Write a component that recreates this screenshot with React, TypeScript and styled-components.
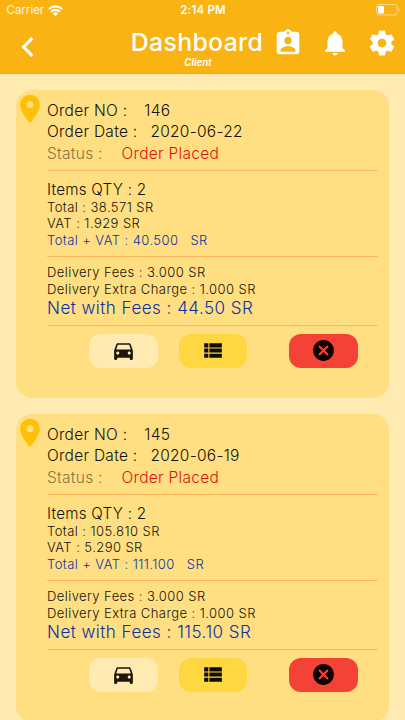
import React from "react";
import styled, { createGlobalStyle, css } from "styled-components";

const GlobalStyle = createGlobalStyle`
  * { box-sizing: border-box; }
  html, body { margin: 0; height: 100%; overflow: hidden; background: #ffebb2; }
  body { font-family: Inter, "Liberation Sans", sans-serif; }
`;

const Screen = styled.div`
  width: 405px;
  height: 720px;
  overflow: hidden;
  background: #ffebb2;
  display: flex;
  flex-direction: column;
`;

const Header = styled.header`
  flex: none;
  height: 74px;
  background: #f9b312;
  border-bottom: 1px solid #f6ad0b;
  color: #fff;
`;

const StatusBar = styled.div`
  height: 20px;
  padding: 0 5.5px 0 6.5px;
  display: grid;
  grid-template-columns: 1fr auto 1fr;
  align-items: center;
  font-size: 11.5px;
  line-height: 20px;
`;

const Carrier = styled.div`
  display: flex;
  align-items: center;
  gap: 4px;
  color: #fff4dc;
`;

const Clock = styled.div`
  font-weight: 600;
  letter-spacing: 0.2px;
`;

const BatterySlot = styled.div`
  display: flex;
  justify-content: flex-end;
`;

const NavBar = styled.div`
  height: 53px;
  padding: 0 8.5px 0 20px;
  display: flex;
  align-items: flex-start;
`;

const BackButton = styled.div`
  width: 110px;
  padding-top: 16px;
  line-height: 0;
`;

const Titles = styled.div`
  width: 136px;
  display: flex;
  flex-direction: column;
  align-items: center;
  white-space: nowrap;
`;

const Title = styled.h1`
  margin: 7px 2px 0 0;
  font-size: 24.8px;
  font-weight: 500;
  line-height: 30px;
  letter-spacing: 0.35px;
`;

const Subtitle = styled.div`
  font-size: 9.8px;
  font-weight: 600;
  font-style: italic;
  line-height: 12px;
`;

const Actions = styled.div`
  margin-left: auto;
  padding-top: 8px;
  display: flex;
  gap: 17px;
  line-height: 0;
`;

const Orders = styled.main`
  padding: 16px 16px 0 15.5px;
  display: flex;
  flex-direction: column;
  gap: 16px;
`;

const Card = styled.article`
  flex: none;
  height: 308px;
  border-radius: 16px;
  background: #ffdf82;
  padding: 0 11px 0 0;
  display: flex;
`;

const PinSlot = styled.div`
  width: 31.5px;
  padding-top: 2px;
  flex: none;
  line-height: 0;

  svg {
    margin-left: -2.7px;
  }
`;

const Details = styled.div`
  flex: 1;
  min-width: 0;
  padding-top: 9.5px;
`;

const Divider = styled.hr`
  margin: 0;
  height: 1px;
  border: 0;
  background: #ffb65c;
`;

const Group = styled.section<{ $height: number; $top?: number }>`
  height: ${(p) => p.$height}px;
  padding-top: ${(p) => p.$top ?? 0}px;
`;

type LineKind = "head" | "items" | "small" | "net";

const kinds = {
  head: css`font-size: 15.5px; line-height: 21.5px; letter-spacing: 0.27px;`,
  items: css`font-size: 15.2px; line-height: 19px; letter-spacing: 0.25px;`,
  small: css`font-size: 13px; line-height: 16.6px; letter-spacing: 0.43px;`,
  net: css`font-size: 17px; line-height: 22px; letter-spacing: 0.48px;`,
};

const Line = styled.div<{ $kind: LineKind; $color?: string; $gap?: number }>`
  display: flex;
  gap: ${(p) => p.$gap ?? 0}px;
  color: ${(p) => p.$color ?? "#15120a"};
  font-weight: 300;
  white-space: nowrap;
  ${(p) => kinds[p.$kind]}
`;

const Value = styled.span<{ $color?: string }>`
  color: ${(p) => p.$color ?? "inherit"};
`;

const Buttons = styled.div`
  display: flex;
  padding: 7.5px 0 0 42px;
`;

const Button = styled.div<{ $color: string; $after?: number }>`
  width: 68.5px;
  height: 34.5px;
  border-radius: 12px;
  margin-right: ${(p) => p.$after ?? 0}px;
  background: ${(p) => p.$color};
  display: flex;
  align-items: center;
  justify-content: center;
`;

const paths = {
  pin: "M12 2C8.13 2 5 5.13 5 9c0 5.25 7 13 7 13s7-7.75 7-13c0-3.87-3.13-7-7-7zm0 9.5c-1.38 0-2.5-1.12-2.5-2.5s1.12-2.5 2.5-2.5 2.5 1.12 2.5 2.5-1.12 2.5-2.5 2.5z",
  badge:
    "M19 3h-4.18C14.4 1.84 13.3 1 12 1c-1.3 0-2.4.84-2.82 2H5c-1.1 0-2 .9-2 2v14c0 1.1.9 2 2 2h14c1.1 0 2-.9 2-2V5c0-1.1-.9-2-2-2zm-7 0c.55 0 1 .45 1 1s-.45 1-1 1-1-.45-1-1 .45-1 1-1zm0 4c1.66 0 3 1.34 3 3s-1.34 3-3 3-3-1.34-3-3 1.34-3 3-3zm6 12H6v-1.4c0-2 4-3.1 6-3.1s6 1.1 6 3.1V19z",
  bell: "M12 22c1.1 0 2-.9 2-2h-4c0 1.1.89 2 2 2zm6-6v-5c0-3.07-1.64-5.64-4.5-6.32V4c0-.83-.67-1.5-1.5-1.5s-1.5.67-1.5 1.5v.68C7.63 5.36 6 7.92 6 11v5l-2 2v1h16v-1l-2-2z",
  gear: "M19.43 12.98c.04-.32.07-.64.07-.98s-.03-.66-.07-.98l2.11-1.65c.19-.15.24-.42.12-.64l-2-3.46c-.12-.22-.39-.3-.61-.22l-2.49 1c-.52-.4-1.08-.73-1.69-.98l-.38-2.65C14.46 2.18 14.25 2 14 2h-4c-.25 0-.46.18-.49.42l-.38 2.65c-.61.25-1.17.59-1.69.98l-2.49-1c-.23-.09-.49 0-.61.22l-2 3.46c-.13.22-.07.49.12.64l2.11 1.65c-.04.32-.07.65-.07.98s.03.66.07.98l-2.11 1.65c-.19.15-.24.42-.12.64l2 3.46c.12.22.39.3.61.22l2.49-1c.52.4 1.08.73 1.69.98l.38 2.65c.03.24.24.42.49.42h4c.25 0 .46-.18.49-.42l.38-2.65c.61-.25 1.17-.59 1.69-.98l2.49 1c.23.09.49 0 .61-.22l2-3.46c.12-.22.07-.49-.12-.64l-2.11-1.65zM12 15.5c-1.93 0-3.5-1.57-3.5-3.5s1.57-3.5 3.5-3.5 3.5 1.57 3.5 3.5-1.57 3.5-3.5 3.5z",
  car: "M18.92 6.01C18.72 5.42 18.16 5 17.5 5h-11c-.66 0-1.21.42-1.42 1.01L3 12v8c0 .55.45 1 1 1h1c.55 0 1-.45 1-1v-1h12v1c0 .55.45 1 1 1h1c.55 0 1-.45 1-1v-8l-2.08-5.99zM6.5 16c-.83 0-1.5-.67-1.5-1.5S5.67 13 6.5 13s1.5.67 1.5 1.5S7.33 16 6.5 16zm11 0c-.83 0-1.5-.67-1.5-1.5s.67-1.5 1.5-1.5 1.5.67 1.5 1.5-.67 1.5-1.5 1.5zM5 11l1.5-4.5h11L19 11H5z",
  list: "M4 14h4v-4H4v4zm0 5h4v-4H4v4zM4 9h4V5H4v4zm5 5h12v-4H9v4zm0 5h12v-4H9v4zM9 5v4h12V5H9z",
  cancel:
    "M12 2C6.47 2 2 6.47 2 12s4.47 10 10 10 10-4.47 10-10S17.53 2 12 2zm5 13.59L15.59 17 12 13.41 8.41 17 7 15.59 10.59 12 7 8.41 8.41 7 12 10.59 15.59 7 17 8.41 13.41 12 17 15.59z",
};

const Icon = ({ name, size, color }: { name: keyof typeof paths; size: number; color: string }) => (
  <svg width={size} height={size} viewBox="0 0 24 24" fill={color}>
    <path d={paths[name]} />
  </svg>
);

const Wifi = () => (
  <svg width="15" height="11" viewBox="0 0 15 11" fill="none" stroke="#fff" strokeWidth="2.1">
    <path d="M0.9 4.1a9.4 9.4 0 0 1 13.2 0M3.1 6.7a6.2 6.2 0 0 1 8.8 0" />
    <path d="M4.9 8.5a3.7 3.7 0 0 1 5.2 0L7.5 11z" fill="#fff" stroke="none" />
  </svg>
);

const Battery = () => (
  <svg width="24" height="12" viewBox="0 0 24 12" fill="none">
    <rect x="0.5" y="0.5" width="20.5" height="10.5" rx="2.4" stroke="#fcd88a" />
    <rect x="2" y="2" width="6" height="7.5" rx="1" fill="#fff" />
    <path d="M22.3 4v4c.9-.3 1.4-1 1.4-2s-.5-1.7-1.4-2z" fill="#fcd88a" />
  </svg>
);

const BackArrow = () => (
  <svg width="15" height="22" viewBox="0 0 15 22" fill="none" stroke="#fff" strokeWidth="3.1">
    <path d="M12.4 2.2L3.6 11l8.8 8.8" />
  </svg>
);

interface Order {
  no: string;
  date: string;
  total: string;
  vat: string;
  sum: string;
  net: string;
}

const orders: Order[] = [
  { no: "146", date: "2020-06-22", total: "38.571", vat: "1.929", sum: "40.500", net: "44.50" },
  { no: "145", date: "2020-06-19", total: "105.810", vat: "5.290", sum: "111.100", net: "115.10" },
];

const blue = "#0c30a6";

const OrderCard = ({ order }: { order: Order }) => (
  <Card>
    <PinSlot>
      <Icon name="pin" size={34} color="#ffc107" />
    </PinSlot>
    <Details>
      <Group $height={70}>
        <Line $kind="head" $gap={17}>
          <span>Order NO :</span>
          <Value>{order.no}</Value>
        </Line>
        <Line $kind="head" $gap={13}>
          <span>Order Date :</span>
          <Value>{order.date}</Value>
        </Line>
        <Line $kind="head" $color="#867643" $gap={18.9}>
          <span>Status :</span>
          <Value $color="#dc1410">Order Placed</Value>
        </Line>
      </Group>
      <Divider />
      <Group $height={85.5} $top={9}>
        <Line $kind="items">Items QTY : 2</Line>
        <Line $kind="small">Total : {order.total} SR</Line>
        <Line $kind="small">VAT : {order.vat} SR</Line>
        <Line $kind="small" $color={blue} $gap={12}>
          <span>Total + VAT : {order.sum}</span>
          <Value>SR</Value>
        </Line>
      </Group>
      <Divider />
      <Group $height={68} $top={7.3}>
        <Line $kind="small">Delivery Fees : 3.000 SR</Line>
        <Line $kind="small">Delivery Extra Charge : 1.000 SR</Line>
        <Line $kind="net" $color={blue}>Net with Fees : {order.net} SR</Line>
      </Group>
      <Divider />
      <Buttons>
        <Button $color="#ffebb2" $after={21}>
          <Icon name="car" size={25} color="#1c170d" />
        </Button>
        <Button $color="#ffd740" $after={42}>
          <Icon name="list" size={25} color="#100d00" />
        </Button>
        <Button $color="#f44336">
          <Icon name="cancel" size={25} color="#0c0202" />
        </Button>
      </Buttons>
    </Details>
  </Card>
);

export default function App() {
  return (
    <Screen>
      <GlobalStyle />
      <Header>
        <StatusBar>
          <Carrier>
            <span>Carrier</span>
            <Wifi />
          </Carrier>
          <Clock>2:14 PM</Clock>
          <BatterySlot>
            <Battery />
          </BatterySlot>
        </StatusBar>
        <NavBar>
          <BackButton>
            <BackArrow />
          </BackButton>
          <Titles>
            <Title>Dashboard</Title>
            <Subtitle>Client</Subtitle>
          </Titles>
          <Actions>
            <Icon name="badge" size={30} color="#fff" />
            <Icon name="bell" size={30} color="#fff" />
            <Icon name="gear" size={30} color="#fff" />
          </Actions>
        </NavBar>
      </Header>
      <Orders>
        {orders.map((order) => (
          <OrderCard key={order.no} order={order} />
        ))}
      </Orders>
    </Screen>
  );
}
